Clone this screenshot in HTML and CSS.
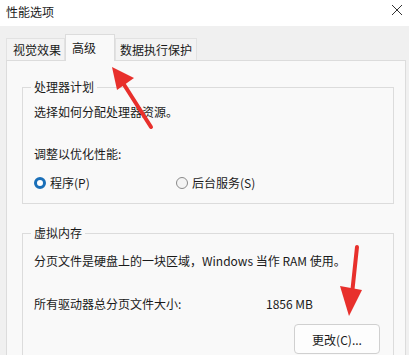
FILE: index.html
```html
<!DOCTYPE html>
<html>
<head lang="zh">
    <meta charset="UTF-8">
    <title>性能选项</title>
    <link rel="stylesheet" href="styles.css">
</head>
<body>
    <div class="window">
        <div class="titlebar">
            <span class="caption">性能选项</span>
            <svg class="close" width="12" height="12" viewBox="0 0 12 12">
                <path d="M1 1 L11 11 M11 1 L1 11" stroke="#333" stroke-width="1" fill="none"/>
            </svg>
        </div>

        <div class="content">
            <div class="tabs">
                <span class="tab">视觉效果</span>
                <span class="tab active">高级</span>
                <span class="tab last">数据执行保护</span>
            </div>

            <div class="panel">
                <fieldset class="group">
                    <legend>处理器计划</legend>
                    <p class="line first">选择如何分配处理器资源。</p>
                    <p class="line sub">调整以优化性能:</p>
                    <div class="radios">
                        <label class="radio"><span class="dot on"></span>程序(P)</label>
                        <label class="radio"><span class="dot"></span>后台服务(S)</label>
                    </div>
                </fieldset>

                <fieldset class="group vm">
                    <legend>虚拟内存</legend>
                    <p class="line first">分页文件是硬盘上的一块区域，Windows 当作 RAM 使用。</p>
                    <div class="size-row">
                        <span>所有驱动器总分页文件大小:</span>
                        <span class="size">1856 MB</span>
                    </div>
                    <div class="actions">
                        <button class="btn">更改(C)...</button>
                    </div>
                </fieldset>
            </div>
        </div>

        <svg class="arrow arrow-up" width="50" height="70" viewBox="0 0 50 70">
            <path d="M42 64 L14 20" stroke="#e8302c" stroke-width="4" stroke-linecap="round" fill="none"/>
            <polygon points="3,4 25,15 8,27" fill="#e8302c"/>
        </svg>
        <svg class="arrow arrow-down" width="30" height="80" viewBox="0 0 30 80">
            <path d="M21 3 L16 50" stroke="#e8302c" stroke-width="4" stroke-linecap="round" fill="none"/>
            <polygon points="4,42 26,46 13,72" fill="#e8302c"/>
        </svg>
    </div>
</body>
</html>
```

FILE: styles.css
```css
body{
    margin: 0;
    padding: 0;
    background-color: #f0f0f0;
    font-family: "Noto Sans CJK SC", "Noto Sans", sans-serif;
    font-size: 12px;
    color: #1a1a1a;
}
.window{
    position: relative;
    width: 409px;
    height: 355px;
    overflow: hidden;
    background-color: #f0f0f0;
}
.titlebar{
    height: 26px;
    background-color: #fff;
    display: flex;
    align-items: center;
    justify-content: space-between;
    padding: 0 6px 3px 6px;
    box-sizing: border-box;
}
.caption{
    font-size: 12px;
}
.close{
    margin-top: -3px;
}
.content{
    padding: 7px 3px 0 6px;
}
.tabs{
    display: flex;
    align-items: flex-end;
    height: 27px;
}
.tab{
    height: 22px;
    line-height: 22px;
    padding: 0 3px 0 6px;
    border: 1px #e2e2e2 solid;
    border-bottom: none;
    background-color: #f3f3f3;
    box-sizing: border-box;
}
.tab.last{
    padding: 0 4px 0 4px;
}
.tab.active{
    height: 27px;
    line-height: 25px;
    padding: 0 18px 0 6px;
    background-color: #f9f9f9;
    border-color: #dcdcdc;
    margin: 0 0 -1px 0;
    position: relative;
    z-index: 1;
}
.panel{
    background-color: #f9f9f9;
    border: 1px #dcdcdc solid;
    border-bottom: none;
    height: 300px;
    padding: 18px 11px 0 15px;
    box-sizing: border-box;
}
.group{
    margin: 0;
    border: 1px #dcdcdc solid;
    padding: 0 11px 0 11px;
    height: 125px;
    box-sizing: border-box;
}
.group legend{
    padding: 0 3px;
    margin-left: -3px;
    line-height: 16px;
}
.line{
    margin: 0;
    line-height: 18px;
}
.line.first{
    margin-top: 8px;
}
.line.sub{
    margin-top: 24px;
}
.radios{
    display: flex;
    margin-top: 11px;
}
.radio{
    display: flex;
    align-items: center;
    width: 142px;
    line-height: 18px;
}
.dot{
    display: inline-block;
    width: 12px;
    height: 12px;
    border: 1px #8a8a8a solid;
    border-radius: 50%;
    box-sizing: border-box;
    background-color: #f4f4f4;
    margin-right: 4px;
}
.dot.on{
    border: 3px #1a6fb8 solid;
    background-color: #fff;
}
.group.vm{
    margin-top: 21px;
    height: 140px;
}
.group.vm .line.first{
    margin-top: 11px;
}
.size-row{
    display: flex;
    margin-top: 25px;
    line-height: 18px;
}
.size-row span:first-child{
    width: 232px;
}
.actions{
    display: flex;
    justify-content: flex-end;
    margin-top: 11px;
    padding-right: 2px;
}
.btn{
    width: 86px;
    height: 30px;
    background-color: #fdfdfd;
    border: 1px #d0d0d0 solid;
    border-radius: 4px;
    font-family: "Noto Sans CJK SC", "Noto Sans", sans-serif;
    font-size: 12px;
    color: #1a1a1a;
}
.arrow{
    position: absolute;
}
.arrow-up{
    left: 109px;
    top: 63px;
}
.arrow-down{
    left: 336px;
    top: 244px;
}
```
